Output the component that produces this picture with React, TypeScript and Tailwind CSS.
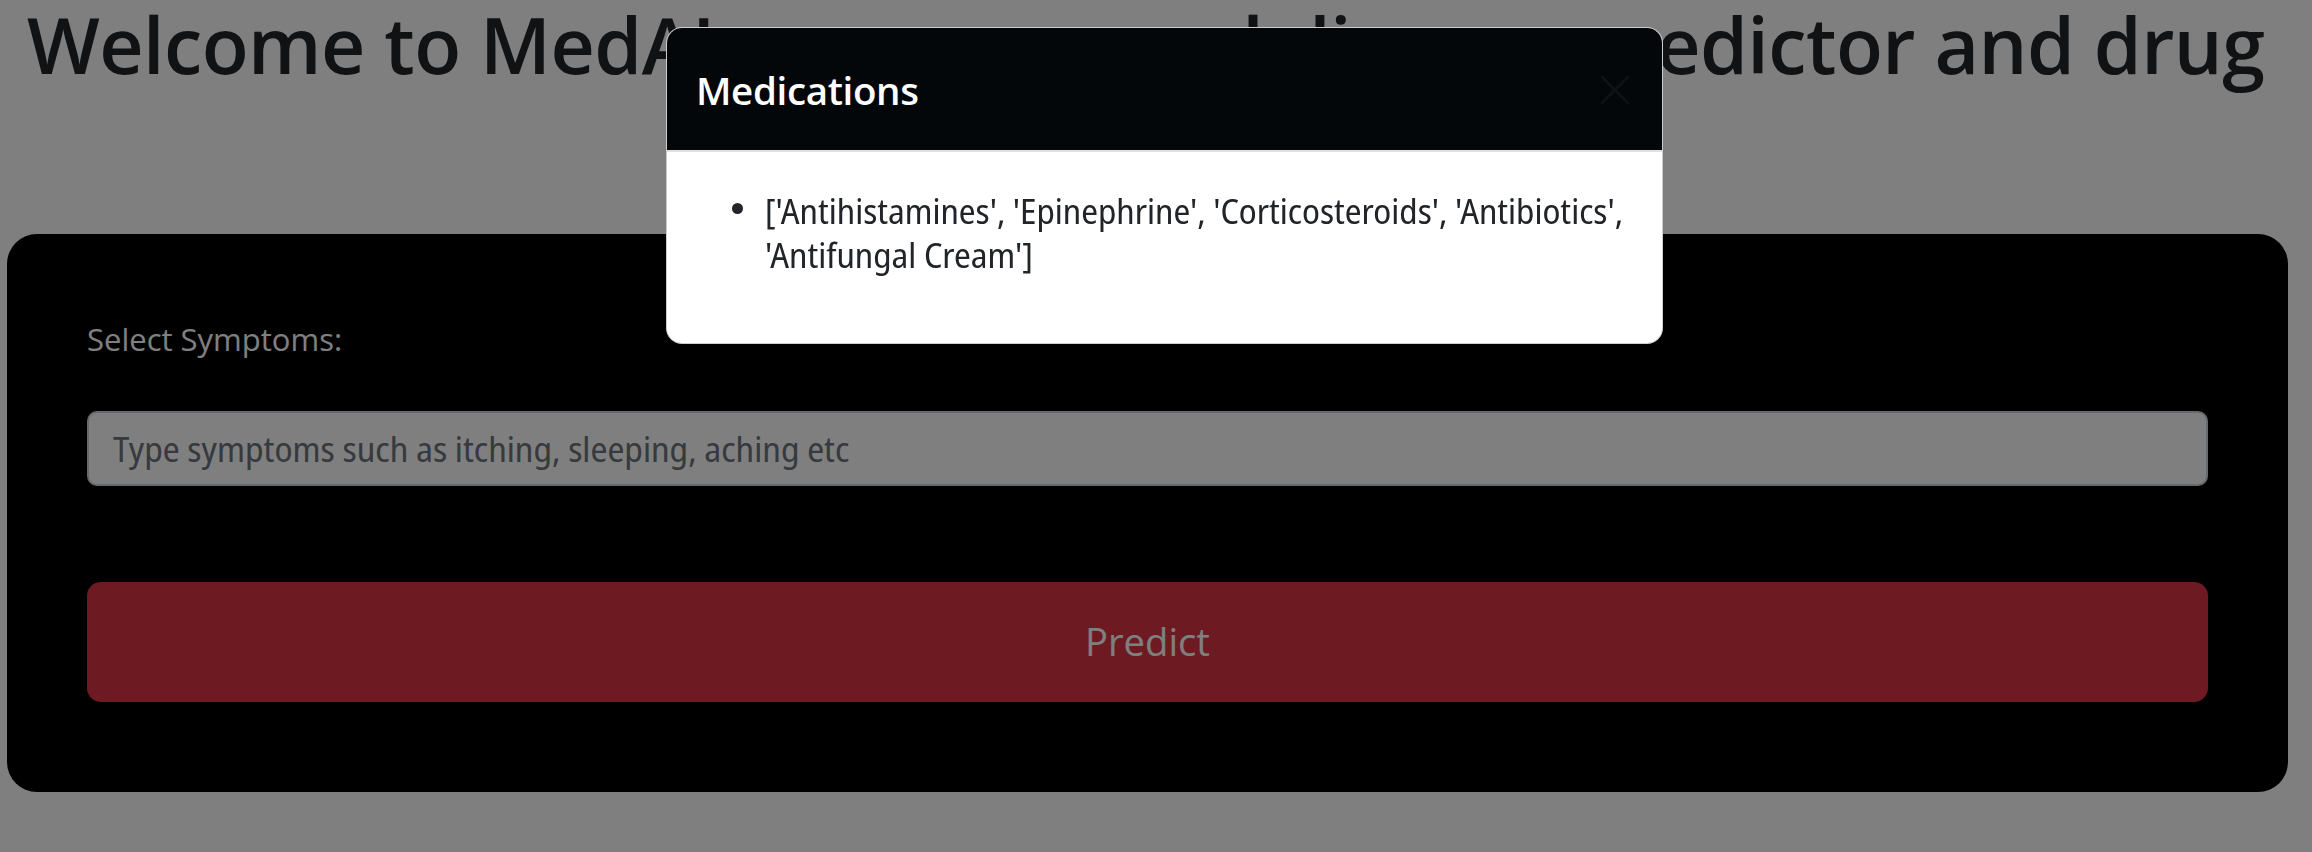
const medications = ["Antihistamines", "Epinephrine", "Corticosteroids", "Antibiotics", "Antifungal Cream"];

const CloseIcon = () => (
  <svg width="32" height="32" viewBox="0 0 32 32" fill="none" stroke="#0f1214" strokeWidth="2.6" strokeLinecap="round">
    <path d="M3 3 L29 29 M29 3 L3 29" />
  </svg>
);

const MedicationsModal = () => (
  <>
    {/* Backdrop */}
    <div className="fixed inset-0 bg-black/50" />

    {/* Dialog */}
    <div className="fixed left-[666px] top-[27px] w-[997px] rounded-[16px] border border-black/20 bg-white overflow-hidden">
      <div className="h-[124px] bg-[#03070a] border-b-2 border-[#dee2e6] flex items-center justify-between pl-[29px] pr-[31px]">
        <h5 className="pt-[2px] font-['Open_Sans',sans-serif] font-semibold tracking-[-0.35px] text-[38.5px] leading-[47px] text-white">
          Medications
        </h5>
        <button className="mt-[2px]">
          <CloseIcon />
        </button>
      </div>
      <div className="pt-[37px] pb-[66px] pl-[32px] pr-[31px]">
        <ul className="font-['Noto_Sans_Display','Noto_Sans',sans-serif] [font-stretch:87.5%] text-[34.5px] leading-[44px] text-[#212529]">
          <li className="flex">
            <span className="w-[66px] shrink-0 pl-[33px] pt-[14px]">
              <span className="block w-[11px] h-[11px] rounded-full bg-[#212529]" />
            </span>
            <span>['{medications.join("', '")}']</span>
          </li>
        </ul>
      </div>
    </div>
  </>
);

export default function App() {
  return (
    <div className="min-h-screen bg-white overflow-hidden">
      <h1 className="pl-[27px] whitespace-nowrap font-['Open_Sans',sans-serif] font-semibold tracking-[-0.55px] text-[77px] leading-[90.3px] text-[#212529]">
        Welcome to MedAI: your personal disease predictor and drug
      </h1>

      <div className="mt-[143.7px] ml-[7px] w-[2281px] rounded-[30px] bg-black px-[80px] pt-[82px] pb-[90px]">
        <label className="block font-['Open_Sans',sans-serif] text-[31px] leading-[46.5px] text-white">
          Select Symptoms:
        </label>
        <input
          type="text"
          placeholder="Type symptoms such as itching, sleeping, aching etc"
          className="mt-[48.5px] block w-full h-[75px] rounded-[10px] border-2 border-[#ced4da] bg-white pl-[24px] font-['Noto_Sans_Display','Noto_Sans',sans-serif] [font-stretch:87.5%] text-[34.9px] text-[#212529] placeholder:text-[#6c757d] outline-none"
        />
        <button className="mt-[96px] w-full h-[120px] rounded-[14px] bg-[#dc3545] font-['Open_Sans',sans-serif] text-[38.2px] text-white">
          Predict
        </button>
      </div>

      <MedicationsModal />
    </div>
  );
}
